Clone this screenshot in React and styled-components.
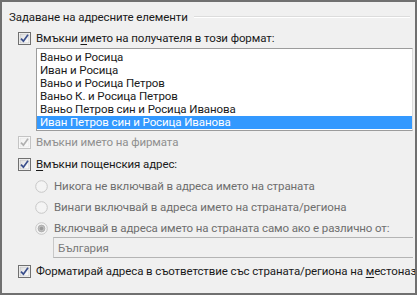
import React from "react";
import styled, { createGlobalStyle } from "styled-components";

const GlobalStyle = createGlobalStyle`
    html, body {
        margin: 0;
        padding: 0;
        background: #f0f0f0;
    }
    body {
        font-family: Roboto, "Noto Sans", "Liberation Sans", sans-serif;
        font-size: 11.5px;
        letter-spacing: -0.1px;
        color: #1a1a1a;
    }
`;

const Frame = styled.div`
    box-sizing: border-box;
    width: 417px;
    height: 295px;
    border: 2px solid #707070;
    background: #f0f0f0;
    overflow: hidden;
    display: flex;
    flex-direction: column;
    & > * {
        flex-shrink: 0;
    }
`;

const Header = styled.div`
    display: flex;
    align-items: center;
    height: 14px;
    margin-top: 8px;
    padding-left: 7px;
    padding-right: 5px;
    white-space: nowrap;
`;

const HeaderLine = styled.div`
    flex: 1;
    height: 0;
    margin-left: 6px;
    border-top: 1px solid #dcdcdc;
    border-bottom: 1px solid #ffffff;
`;

const Row = styled.div`
    display: flex;
    align-items: center;
    height: 16px;
    margin-top: ${(p) => p.$mt}px;
    padding-left: ${(p) => p.$indent}px;
    white-space: nowrap;
    overflow: hidden;
    color: ${(p) => p.$color || "#1a1a1a"};
    & > svg {
        flex-shrink: 0;
    }
`;

const Label = styled.span`
    margin-left: ${(p) => p.$gap}px;
`;

const Key = styled.u`
    text-decoration: underline;
    text-underline-offset: 2px;
`;

const ListBox = styled.div`
    box-sizing: border-box;
    margin-top: 2px;
    margin-left: 34px;
    width: 377px;
    height: 83px;
    background: #ffffff;
    border: 1px solid #9c9c9c;
    border-right-color: #dcdcdc;
    padding-top: 2px;
    display: flex;
    flex-direction: column;
    overflow: hidden;
`;

const ListItem = styled.div`
    flex-shrink: 0;
    height: 13px;
    line-height: 13px;
    padding-left: 3px;
    white-space: nowrap;
    background: ${(p) => (p.$selected ? "#3399ff" : "transparent")};
    color: ${(p) => (p.$selected ? "#ffffff" : "#1a1a1a")};
`;

const Combo = styled.div`
    box-sizing: border-box;
    margin-top: 1px;
    margin-left: 51px;
    width: 360px;
    height: 21px;
    border-top: 1px solid #b4b4b4;
    border-bottom: 1px solid #b4b4b4;
    border-left: 1px solid #c8c8c8;
    display: flex;
    align-items: center;
    padding-left: 4px;
    color: #7a7a7a;
`;

const CheckBox = ({ disabled }) => (
    <svg width="13" height="13" viewBox="0 0 13 13">
        <defs>
            <linearGradient id={disabled ? "cbd" : "cbe"} x1="0" y1="0" x2="1" y2="1">
                <stop offset="0" stopColor={disabled ? "#f2f2f2" : "#dcdcdc"} />
                <stop offset="1" stopColor={disabled ? "#fafafa" : "#ffffff"} />
            </linearGradient>
        </defs>
        <rect x="0.5" y="0.5" width="12" height="12" fill="#ffffff" stroke={disabled ? "#c4c4c4" : "#707070"} />
        <rect x="2" y="2" width="9" height="9" fill={`url(#${disabled ? "cbd" : "cbe"})`} stroke={disabled ? "#e0e0e0" : "#b9b9b9"} strokeWidth="0.6" />
        <path
            d="M3 6.6 L5.4 9.2 L10 2.8"
            fill="none"
            stroke={disabled ? "#b0b0b0" : "#3a4f8c"}
            strokeWidth="1.7"
        />
    </svg>
);

const Radio = ({ checked }) => (
    <svg width="13" height="13" viewBox="0 0 13 13">
        <circle cx="6.5" cy="6.5" r="5.8" fill="#f4f4f4" stroke="#c8c8c8" />
        {checked && <circle cx="6.5" cy="6.5" r="3.4" fill="#bdbdbd" stroke="#a8a8a8" strokeWidth="0.8" />}
        {checked && <circle cx="6.5" cy="6.5" r="1.8" fill="#9a9a9a" />}
    </svg>
);

const names = [
    "Ваньо и Росица",
    "Иван и Росица",
    "Ваньо и Росица Петров",
    "Ваньо К. и Росица Петров",
    "Ваньо Петров син и Росица Иванова",
    "Иван Петров син и Росица Иванова",
];

const radioGray = "#6e6e6e";

export default function App() {
    return (
        <>
            <GlobalStyle />
            <Frame>
                <Header>
                    <span>Задаване на адресните елементи</span>
                    <HeaderLine />
                </Header>
                <Row $mt={6} $indent={16}>
                    <CheckBox />
                    <Label $gap={5}>
                        Вмъкни <Key>и</Key>мето на получателя в този формат:
                    </Label>
                </Row>
                <ListBox>
                    {names.map((n, i) => (
                        <ListItem key={n} $selected={i === names.length - 1}>
                            {n}
                        </ListItem>
                    ))}
                </ListBox>
                <Row $mt={3} $indent={16} $color="#8f8f8f">
                    <CheckBox disabled />
                    <Label $gap={5}>Вмъкни името на фирмата</Label>
                </Row>
                <Row $mt={6} $indent={16}>
                    <CheckBox />
                    <Label $gap={5}>
                        <Key>В</Key>мъкни пощенския адрес:
                    </Label>
                </Row>
                <Row $mt={6} $indent={33} $color={radioGray}>
                    <Radio />
                    <Label $gap={6}>Никога не включвай в адреса името на страната</Label>
                </Row>
                <Row $mt={5} $indent={33} $color={radioGray}>
                    <Radio />
                    <Label $gap={6}>Винаги включвай в адреса името на страната/региона</Label>
                </Row>
                <Row $mt={5} $indent={33} $color={radioGray}>
                    <Radio checked />
                    <Label $gap={6}>Включвай в адреса името на страната само ако е различно от:</Label>
                </Row>
                <Combo>България</Combo>
                <Row $mt={5} $indent={16}>
                    <CheckBox />
                    <Label $gap={5}>
                        Форматирай адреса в съответствие със страната/региона на <Key>м</Key>естоназначение
                    </Label>
                </Row>
            </Frame>
        </>
    );
}
